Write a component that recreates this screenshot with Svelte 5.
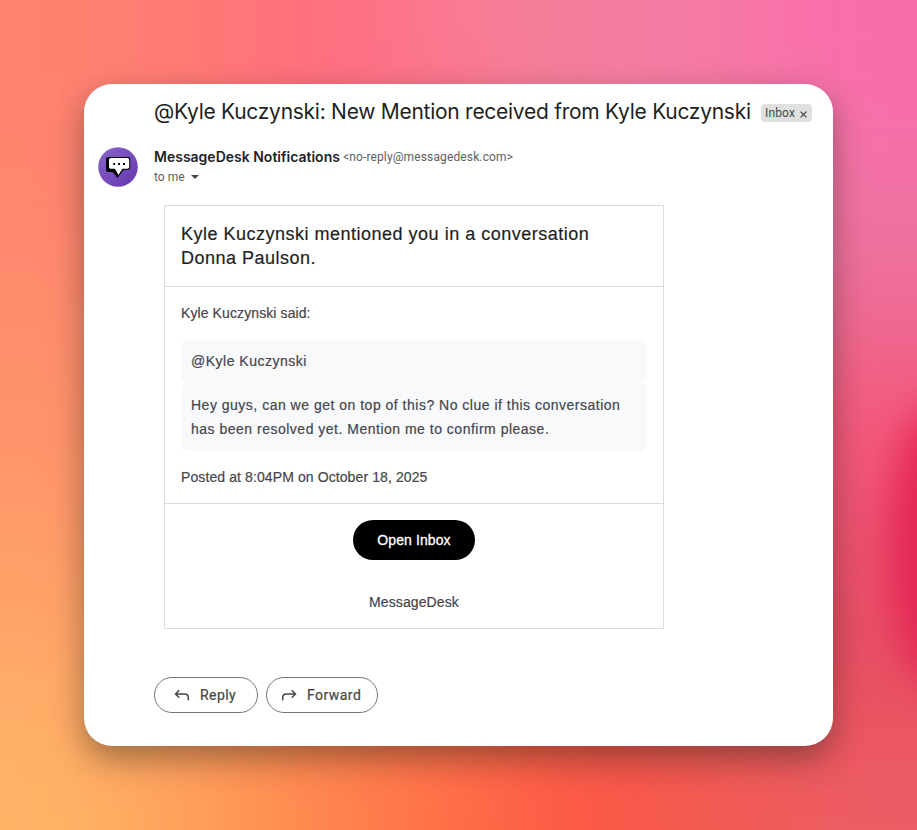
<script>
  // Backdrop swatches, row by row; the blur melts them into one mesh gradient.
  const swatches = [
    ['#ff836f', '#ff7975', '#ff6e80', '#f97b92', '#f3809f', '#f678a5', '#f96cac'],
    ['#ff856f', '#ff7776', '#ff6b80', '#fd7089', '#f27d9f', '#f37aa2', '#f373a6'],
    ['#ff8c6d', '#ff846f', '#ff7279', '#f96f88', '#f0789a', '#ee7097', '#ec6e98'],
    ['#ff936b', '#ff8a6c', '#ff7670', '#f86a7c', '#f0608a', '#f0607f', '#f4587b'],
    ['#ff9c69', '#ff9067', '#ff7c65', '#fa6767', '#f25a70', '#ee5b70', '#ed5070'],
    ['#ffa868', '#ff9860', '#ff8258', '#ff6852', '#f6505a', '#eb5564', '#e64b62'],
    ['#ffb367', '#ff9f5a', '#ff844d', '#ff6d47', '#fb5644', '#f15b52', '#ec5c64']
  ];
  const cellW = 131;
  const cellH = 119;
  const last = 6;
  const cells = swatches.flatMap((row, r) =>
    row.map((fill, c) => {
      const x = c === 0 ? -200 : c * cellW;
      const y = r === 0 ? -200 : r * cellH;
      const right = c === last ? 1150 : (c + 1) * cellW + 1;
      const bottom = r === last ? 1050 : (r + 1) * cellH + 1;
      return { x, y, w: right - x, h: bottom - y, fill };
    })
  );
</script>

<main>
  <svg class="backdrop" viewBox="0 0 917 830" aria-hidden="true">
    <defs>
      <filter id="melt" filterUnits="userSpaceOnUse" x="-200" y="-200" width="1350" height="1250" color-interpolation-filters="sRGB">
        <feGaussianBlur stdDeviation="60" />
      </filter>
      <filter id="glow" filterUnits="userSpaceOnUse" x="780" y="250" width="300" height="600" color-interpolation-filters="sRGB">
        <feGaussianBlur stdDeviation="18" />
      </filter>
    </defs>
    <g filter="url(#melt)">
      {#each cells as c}
        <rect x={c.x} y={c.y} width={c.w} height={c.h} fill={c.fill} />
      {/each}
    </g>
    <ellipse cx="938" cy="545" rx="48" ry="140" fill="#e21f50" opacity=".85" filter="url(#glow)" />
  </svg>

  <article class="card">
    <header class="subject">
      <h1>@Kyle Kuczynski: New Mention received from Kyle Kuczynski</h1>
      <span class="tag">Inbox
        <svg width="7" height="7" viewBox="0 0 7 7"><path d="M.6 .6 6.4 6.4M6.4 .6 .6 6.4" stroke="#444746" stroke-width="1.3" /></svg>
      </span>
    </header>

    <section class="sender">
      <svg class="avatar" width="40" height="40" viewBox="0 0 40 40">
        <defs>
          <linearGradient id="violet" x1="0" y1="0" x2="1" y2="1">
            <stop offset="0" stop-color="#8863ca" />
            <stop offset="1" stop-color="#6637ae" />
          </linearGradient>
        </defs>
        <circle cx="20" cy="20" r="19.8" fill="url(#violet)" />
        <path d="M10.5 10H30Q32.2 10 32.2 12.2V20.5Q32.2 22.8 30 22.8H25.6L19.5 31 14.8 25H10.5Q8 25 8 22.5V12.5Q8 10 10.5 10Z" fill="#000" />
        <path d="M12.8 11.1H29.4Q31.2 11.1 31.2 12.9V20Q31.2 21.8 29.4 21.8H24.5L20.4 28 17 21.8H12.8Q11 21.8 11 20V12.9Q11 11.1 12.8 11.1Z" fill="#fff" />
        <path d="M15.2 16h1.9v1.9h-1.9zM20.1 16h1.9v1.9h-1.9zM25 16h1.9v1.9H25z" fill="#000" />
      </svg>
      <div class="who">
        <div class="from"><b>MessageDesk Notifications</b><span class="address">&lt;no-reply@messagedesk.com&gt;</span></div>
        <div class="to"><span>to me</span><svg width="8" height="4" viewBox="0 0 8 4"><path d="M0 0H8L4 4Z" fill="#444746" /></svg></div>
      </div>
    </section>

    <section class="mail">
      <h2>Kyle Kuczynski mentioned you in a conversation Donna Paulson.</h2>
      <div class="body">
        <p class="said">Kyle Kuczynski said:</p>
        <p class="quote">@Kyle Kuczynski</p>
        <p class="quote">Hey guys, can we get on top of this? No clue if this conversation<br />has been resolved yet. Mention me to confirm please.</p>
        <p class="posted">Posted at 8:04PM on October 18, 2025</p>
      </div>
      <footer>
        <button class="open">Open Inbox</button>
        <p class="brand">MessageDesk</p>
      </footer>
    </section>

    <div class="actions">
      <button class="reply">
        <svg width="16" height="14" viewBox="0 0 16 14"><path d="M5.3 1.2 1.5 5 5.3 8.8M1.8 5H10.6Q14.3 5 14.3 8.7V11.3" /></svg>
        <span>Reply</span>
      </button>
      <button class="forward">
        <svg width="16" height="14" viewBox="0 0 16 14"><path d="M10.7 1.2 14.5 5 10.7 8.8M14.2 5H5.4Q1.7 5 1.7 8.7V11.3" /></svg>
        <span>Forward</span>
      </button>
    </div>
  </article>
</main>

<style>
  main {
    position: relative;
    box-sizing: border-box;
    width: 917px;
    height: 830px;
    padding: 84px;
    overflow: hidden;
    font-family: Roboto, sans-serif;
  }
  .backdrop {
    position: absolute;
    inset: 0;
    width: 917px;
    height: 830px;
  }
  .card {
    position: relative;
    box-sizing: border-box;
    width: 749px;
    height: 662px;
    padding-top: 15px;
    border-radius: 28px;
    background: #fff;
    box-shadow: 0 13px 32px rgba(30, 30, 20, 0.42);
  }
  h1, h2, p { margin: 0; font-weight: 400; }
  .subject {
    display: flex;
    align-items: center;
    height: 28px;
    padding-left: 70px;
  }
  h1 {
    width: 597px;
    padding-bottom: 2px;
    font: 400 21px/26px Inter, sans-serif;
    letter-spacing: -0.27px;
    color: #1f1f1f;
    white-space: nowrap;
  }
  .tag {
    display: flex;
    align-items: center;
    justify-content: space-between;
    box-sizing: border-box;
    width: 51px;
    height: 18px;
    margin-left: 10px;
    padding: 0 5px 0 4px;
    border-radius: 4px;
    background: #dfe1df;
    font-size: 12px;
    letter-spacing: 0.15px;
    color: #444746;
  }
  .tag svg { margin-top: 2px; }
  .sender {
    display: flex;
    height: 78px;
    padding: 20px 0 0 14px;
    box-sizing: border-box;
  }
  .who { margin-left: 16px; }
  .from, .to {
    display: flex;
    align-items: center;
    height: 20px;
    white-space: nowrap;
  }
  .from b {
    width: 189px;
    font: 600 14px/20px Inter, sans-serif;
    color: #1f1f1f;
  }
  .address, .to { font-size: 12px; color: #5e5e5e; }
  .address { letter-spacing: 0.13px; }
  .to svg { margin-left: 6px; }
  .mail {
    box-sizing: border-box;
    width: 500px;
    height: 424px;
    margin-left: 80px;
    border: 1px solid #dcdcdc;
    font-family: "Liberation Sans", Arial, sans-serif;
    font-size: 14px;
    line-height: 20px;
    letter-spacing: 0.1px;
    color: #45454d;
    -webkit-text-stroke: 0.2px currentColor;
  }
  h2 {
    padding: 16px;
    border-bottom: 1px solid #dcdcdc;
    font-size: 18px;
    line-height: 24px;
    letter-spacing: 0.5px;
    color: #1f1f1f;
  }
  .body {
    padding: 16px;
    border-bottom: 1px solid #dcdcdc;
  }
  .said { margin-bottom: 16px; }
  .quote {
    padding: 10px;
    border-radius: 7px;
    background: #f8f9fb;
    line-height: 24px;
    letter-spacing: 0.5px;
    white-space: nowrap;
  }
  .posted { margin-top: 16px; }
  footer {
    display: flex;
    flex-direction: column;
    align-items: center;
    gap: 32px;
    padding-top: 16px;
  }
  button { padding: 0; border: 0; }
  .open {
    width: 122px;
    height: 40px;
    border-radius: 20px;
    background: #000;
    color: #fff;
    font: 400 14px/20px "Liberation Sans", Arial, sans-serif;
    letter-spacing: 0.1px;
    -webkit-text-stroke: 0.3px #fff;
  }
  .actions {
    display: flex;
    gap: 8px;
    margin: 48px 0 0 70px;
  }
  .actions button {
    display: flex;
    align-items: center;
    box-sizing: border-box;
    height: 36px;
    border: 1px solid #747775;
    border-radius: 18px;
    background: #fff;
    color: #444746;
    font: 400 14px/20px Roboto, sans-serif;
    letter-spacing: 0.45px;
    -webkit-text-stroke: 0.2px #444746;
  }
  .actions .reply { width: 104px; padding-left: 19px; }
  .actions .forward { width: 112px; padding-left: 14px; }
  .actions svg {
    margin: 2px 10px 0 0;
    fill: none;
    stroke: #444746;
    stroke-width: 1.5;
  }
</style>
